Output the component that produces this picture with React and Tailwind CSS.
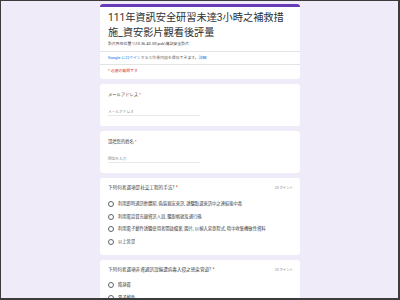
import React from "react";

const font = { fontFamily: '"Roboto", "Noto Sans CJK JP", "Noto Sans", sans-serif' };

function Card({ children, className = "" }) {
  return (
    <div className={"w-[200px] bg-white rounded-[3px] shrink-0 " + className}>{children}</div>
  );
}

function Radio({ label }) {
  return (
    <div className="flex items-center h-[12.5px]">
      <div className="w-[6px] h-[6px] rounded-full border border-[#5f6368] shrink-0" />
      <span className="ml-[4px] text-[4.3px] leading-[6px] text-[#3c4043] whitespace-nowrap">{label}</span>
    </div>
  );
}

export default function App() {
  return (
    <div
      style={font}
      className="w-[400px] h-[300px] overflow-hidden bg-[#f0ebf8] border-l border-t border-r-2 border-b-2 border-[#3c3c3c]"
    >
      <div className="flex flex-col gap-[5px] pt-[3px] pl-[99px]">
        {/* Header */}
        <Card className="overflow-hidden">
          <div className="h-[3px] bg-[#673ab7]" />
          <div className="px-[8px] pt-[3px]">
            <div className="text-[10.2px] leading-[15px] text-[#2d2f31]">
              111年資訊安全研習未達3小時之補救措施_資安影片觀看後評量
            </div>
            <div className="mt-[1px] text-[3.9px] leading-[6px] text-[#3c4043] whitespace-nowrap">
              影片所在位置 \\10.36.40.30\pub\資訊安全影片
            </div>
          </div>
          <div className="mt-[4px] border-t border-[#e4e4e4]" />
          <div className="px-[8px] py-[3px] text-[3.9px] leading-[6px] text-[#5f6368] whitespace-nowrap">
            <span className="text-[#1a73e8]">Google にログイン</span>すると作業内容を保存できます。
            <span className="text-[#1a73e8]">詳細</span>
          </div>
          <div className="border-t border-[#e4e4e4]" />
          <div className="px-[8px] pt-[3px] pb-[5px] text-[3.9px] leading-[6px] text-[#d93025]">
            * 必須の質問です
          </div>
        </Card>

        {/* Email */}
        <Card className="px-[8px] pt-[8px] pb-[10px]">
          <div className="text-[4.3px] leading-[6px] text-[#3c4043]">
            メールアドレス <span className="text-[#d93025]">*</span>
          </div>
          <div className="mt-[11px] w-[92px] border-b border-[#e8e8e8] text-[3.7px] leading-[6px] text-[#80868b]">
            メールアドレス
          </div>
        </Card>

        {/* Name */}
        <Card className="px-[8px] pt-[8px] pb-[10px]">
          <div className="text-[4.3px] leading-[6px] text-[#3c4043]">
            請填您的姓名 <span className="text-[#d93025]">*</span>
          </div>
          <div className="mt-[11px] w-[92px] border-b border-[#e8e8e8] text-[3.7px] leading-[6px] text-[#80868b]">
            回答を入力
          </div>
        </Card>

        {/* Q1 */}
        <Card className="pl-[8px] pr-[7px] pt-[7px] pb-[7px]">
          <div className="flex items-center justify-between">
            <div className="text-[4.6px] leading-[6px] text-[#3c4043]">
              下列何者選項是社交工程的手法? <span className="text-[#d93025]">*</span>
            </div>
            <div className="text-[3.4px] leading-[6px] text-[#80868b]">20 ポイント</div>
          </div>
          <div className="mt-[7px] flex flex-col">
            <Radio label="利用即時通訊軟體知, 偽裝親友來訊, 誘騙點選來訊中之連結後中毒" />
            <Radio label="利用電話冒充銀資訊人員, 騙取帳號及通行碼" />
            <Radio label="利用電子郵件誘騙使用者開啟檔案, 圖片, 以植入惡意程式, 暗中收集機敏性資料" />
            <Radio label="以上皆是" />
          </div>
        </Card>

        {/* Q2 */}
        <Card className="pl-[8px] pr-[7px] pt-[7px] pb-[7px]">
          <div className="flex items-center justify-between">
            <div className="text-[4.6px] leading-[6px] text-[#3c4043]">
              下列何者選項非資通訊設備遭病毒入侵之感染管道? <span className="text-[#d93025]">*</span>
            </div>
            <div className="text-[3.4px] leading-[6px] text-[#80868b]">20 ポイント</div>
          </div>
          <div className="mt-[6px] flex flex-col">
            <Radio label="隨身碟" />
            <Radio label="電子郵件" />
          </div>
        </Card>
      </div>
    </div>
  );
}
